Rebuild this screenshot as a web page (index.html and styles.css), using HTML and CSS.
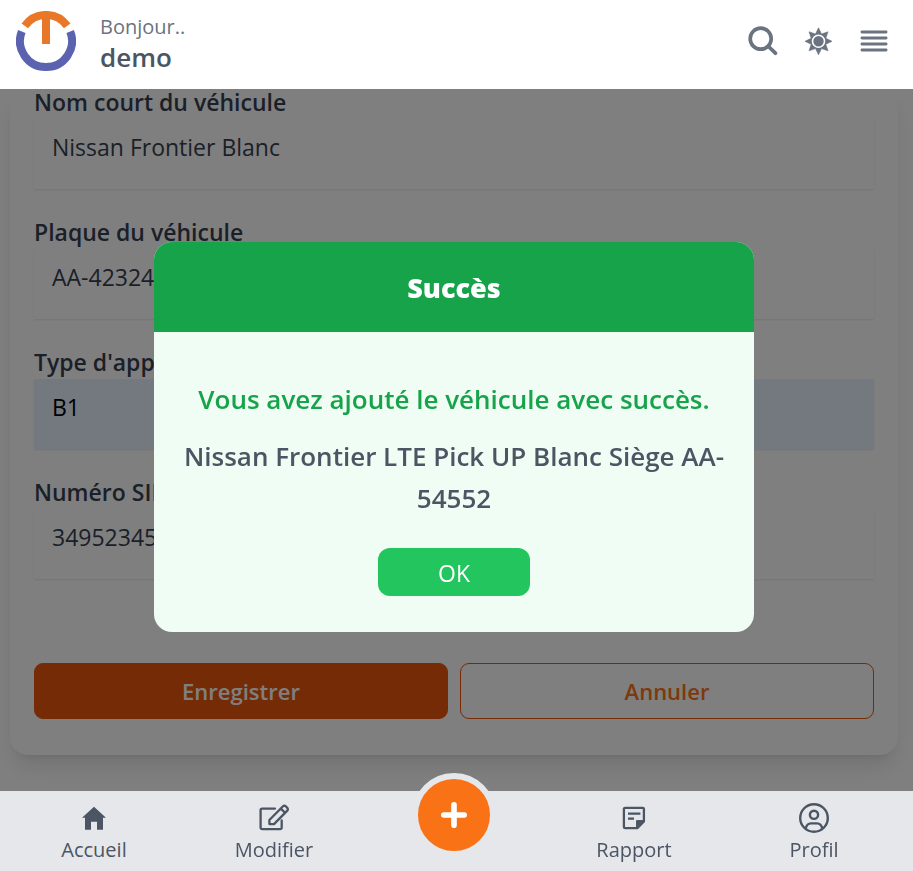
FILE: index.html
```html
<!DOCTYPE html>
<html lang="fr">
<head>
<meta charset="utf-8">
<meta name="viewport" content="width=device-width, initial-scale=1">
<title>Véhicule</title>
<link rel="stylesheet" href="styles.css">
</head>
<body>
<header class="topbar">
  <svg class="logo" viewBox="0 0 60 60" fill="none" stroke-width="8" aria-hidden="true">
    <path stroke="#5b63b0" d="M5.8 20.5A26 26 0 1 0 54.2 20.5"/>
    <path stroke="#e87828" d="M8.8 14.9A26 26 0 0 1 51.2 14.9M30 4V33"/>
  </svg>
  <div class="greeting">
    <span class="hello">Bonjour..</span>
    <span class="user">demo</span>
  </div>
  <div class="tools">
    <button class="tool" type="button" aria-label="Rechercher">
      <svg viewBox="0 0 32 32" fill="none" stroke="currentColor" stroke-width="3.7" stroke-linecap="round"><circle cx="14.7" cy="13.7" r="10.5"/><path d="M22.5 21.5L29.4 28.2"/></svg>
    </button>
    <button class="tool" type="button" aria-label="Thème">
      <svg viewBox="0 0 32 32" fill="currentColor"><path d="M16.5 2.8L19.5 9L26 6.8L23.8 13.3L30 16.3L23.8 19.3L26 25.8L19.5 23.6L16.5 29.8L13.5 23.6L7 25.8L9.2 19.3L3 16.3L9.2 13.3L7 6.8L13.5 9Z" stroke="currentColor" stroke-width="0.6" stroke-linejoin="round"/><circle cx="16.5" cy="16.3" r="6" stroke="#fff" stroke-width="1.6"/></svg>
    </button>
    <button class="tool" type="button" aria-label="Menu">
      <svg viewBox="0 0 32 32" fill="none" stroke="currentColor" stroke-width="2.8" stroke-linecap="round"><path d="M3.9 7H28.1M3.9 13H28.1M3.9 19H28.1M3.9 25H28.1"/></svg>
    </button>
  </div>
</header>

<main class="content">
  <form class="card">
    <div class="field">
      <label for="name">Nom court du véhicule</label>
      <input id="name" type="text" value="Nissan Frontier Blanc">
    </div>
    <div class="field">
      <label for="plate">Plaque du véhicule</label>
      <input id="plate" type="text" value="AA-42324">
    </div>
    <div class="field">
      <label for="type">Type d'appareil</label>
      <input id="type" class="filled" type="text" value="B1">
    </div>
    <div class="field">
      <label for="sim">Numéro SIM</label>
      <input id="sim" type="text" value="34952345">
    </div>
    <div class="actions">
      <button class="btn primary" type="button">Enregistrer</button>
      <button class="btn outline" type="button">Annuler</button>
    </div>
  </form>
</main>

<div class="overlay">
  <section class="modal" role="dialog" aria-modal="true" aria-labelledby="modal-title">
    <h2 id="modal-title" class="modal-title">Succès</h2>
    <div class="modal-body">
      <p class="message">Vous avez ajouté le véhicule avec succès.</p>
      <p class="vehicle">Nissan Frontier LTE Pick UP Blanc Siège AA-54552</p>
      <button class="ok" type="button">OK</button>
    </div>
  </section>
</div>

<nav class="bottombar">
  <a class="tab" href="#accueil">
    <svg viewBox="0 0 32 32" fill="currentColor"><path d="M16 4.8L28 15.7H25V27.7H19V19.7H13V27.7H7V15.7H4Z"/></svg>
    <span>Accueil</span>
  </a>
  <a class="tab" href="#modifier">
    <svg viewBox="0 0 32 32" fill="none" stroke="currentColor" stroke-width="2.3" stroke-linejoin="round" stroke-linecap="round"><path d="M17 6.6H4.1A1.5 1.5 0 0 0 2.6 8.1V25.7A1.5 1.5 0 0 0 4.1 27.2H22.2A1.5 1.5 0 0 0 23.7 25.7V18.5"/><path d="M11.4 18L25 4.3A1.9 1.9 0 0 1 27.7 4.3L29.3 5.9A1.9 1.9 0 0 1 29.3 8.6L16 22.1H11.4ZM22.9 6.6L27 10.8"/></svg>
    <span>Modifier</span>
  </a>
  <a class="tab" href="#ajouter" aria-label="Ajouter">
    <span class="fab"><svg viewBox="0 0 32 32" fill="none" stroke="currentColor" stroke-width="5.6" stroke-linecap="round"><path d="M16 5.8V26.2M5.8 16H26.2"/></svg></span>
  </a>
  <a class="tab" href="#rapport">
    <svg viewBox="0 0 32 32" fill="none" stroke="currentColor" stroke-width="2.3" stroke-linejoin="round"><path d="M7.2 5.8H24.6A1.3 1.3 0 0 1 25.9 7.1V19.5L19.3 26.2H7.2A1.3 1.3 0 0 1 5.9 24.9V7.1A1.3 1.3 0 0 1 7.2 5.8ZM10 11.6H22.4M10 16.6H16"/><path fill="currentColor" stroke-width="1" d="M18.6 26V18.6H26Z"/></svg>
    <span>Rapport</span>
  </a>
  <a class="tab" href="#profil">
    <svg viewBox="0 0 32 32" fill="none" stroke="currentColor" stroke-width="2.4"><circle cx="16" cy="16" r="13.8"/><circle cx="16" cy="12.8" r="4.1"/><path d="M7.6 26.8C8.6 22.8 10.6 21.4 13 21.4H19C21.4 21.4 23.4 22.8 24.4 26.8"/></svg>
    <span>Profil</span>
  </a>
</nav>
</body>
</html>
```
FILE: styles.css
```css
* {
  box-sizing: border-box;
}

body {
  margin: 0;
  min-height: 100vh;
  display: flex;
  flex-direction: column;
  background: #fff;
  color: #374151;
  font-family: "Segoe UI", "Open Sans", "Noto Sans", sans-serif;
  font-size: 22px;
}

button,
input {
  font: inherit;
}

h2,
p {
  margin: 0;
}

.topbar {
  position: sticky;
  top: 0;
  z-index: 3;
  display: flex;
  align-items: center;
  height: 89px;
  padding: 0 23px 7px 16px;
  background: #fff;
}

.logo {
  width: 60px;
  height: 60px;
}

.greeting {
  display: flex;
  flex-direction: column;
  margin-left: 24px;
  padding-top: 4px;
}

.hello {
  font-size: 20px;
  line-height: 28px;
  color: #6b7280;
}

.user {
  font-size: 26px;
  line-height: 32px;
  font-weight: 600;
  color: #4b5563;
}

.tools {
  display: flex;
  gap: 24px;
  margin-left: auto;
}

.tool {
  width: 32px;
  height: 32px;
  padding: 0;
  border: 0;
  background: none;
  color: #6b7280;
}

.tool svg {
  display: block;
}

.content {
  flex: 1;
  padding: 0 15px 36px 10px;
}

.card {
  padding: 0 24px 36px;
  border-radius: 0 0 18px 18px;
  background: #fff;
  box-shadow: 0 15px 22px -4px rgba(0, 0, 0, 0.1), 0 6px 9px -6px rgba(0, 0, 0, 0.1);
}

.field {
  display: flex;
  flex-direction: column;
  gap: 4px;
  margin-bottom: 30px;
}

.field label {
  font-size: 23px;
  line-height: 26px;
  font-weight: 600;
}

.field input {
  height: 70px;
  padding: 0 18px 14px;
  border: 0;
  background: #fff;
  color: #374151;
  font-size: 23px;
  box-shadow: 0 1px 2px rgba(0, 0, 0, 0.1);
}

.field .filled {
  background: #e8f0fe;
  color: #000;
}

.actions {
  display: grid;
  grid-template-columns: 1fr 1fr;
  gap: 12px;
  padding-top: 54px;
}

.btn {
  height: 56px;
  border: 1px solid #ea580c;
  border-radius: 9px;
  font-weight: 600;
}

.primary {
  background: #ea580c;
  color: #fff;
}

.outline {
  background: #fff;
  color: #f97316;
}

.overlay {
  position: fixed;
  inset: 0;
  z-index: 2;
  display: flex;
  align-items: center;
  justify-content: center;
  padding: 3px 5px 0 0;
  background: rgba(0, 0, 0, 0.5);
}

.modal {
  width: 100%;
  max-width: 600px;
  border-radius: 18px;
  overflow: hidden;
  background: #f0fdf4;
  text-align: center;
}

.modal-title {
  padding: 25px 24px 23px;
  background: #16a34a;
  color: #fff;
  font-size: 27px;
  line-height: 42px;
  font-weight: 800;
}

.modal-body {
  padding: 46px 24px 36px;
  font-size: 26px;
  line-height: 42px;
  font-weight: 600;
}

.message {
  color: #16a34a;
}

.vehicle {
  margin: 15px 0 29px;
  color: #4b5563;
}

.ok {
  width: 152px;
  height: 48px;
  border: 0;
  border-radius: 12px;
  background: #22c55e;
  color: #fff;
  font-size: 23px;
  font-weight: 400;
  line-height: 48px;
}

.bottombar {
  position: sticky;
  bottom: 0;
  z-index: 3;
  display: grid;
  grid-template-columns: repeat(5, 1fr);
  height: 80px;
  padding: 0 9px 0 4px;
  background: #e5e7eb;
}

.tab {
  display: flex;
  flex-direction: column;
  align-items: center;
  padding-top: 11px;
  color: #4b5563;
  font-size: 20px;
  line-height: 32px;
  text-decoration: none;
}

.tab svg {
  flex: none;
  width: 32px;
  height: 32px;
}

.fab {
  display: flex;
  align-items: center;
  justify-content: center;
  flex: none;
  width: 84px;
  height: 84px;
  margin-top: -29px;
  border: 6px solid #e5e7eb;
  border-radius: 50%;
  background: #f97316;
  color: #fff;
}
```
